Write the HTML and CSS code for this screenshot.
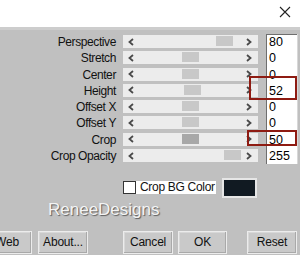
FILE: index.html
```html
<!DOCTYPE html>
<html>
<head>
<meta charset="utf-8">
<link rel="stylesheet" href="styles.css">
</head>
<body>
<div class="dialog">
  <div class="titlebar">
    <svg class="close" width="12" height="12" viewBox="0 0 12 12"><path d="M1 1 L11 11 M11 1 L1 11" stroke="#222" stroke-width="1.1" fill="none"/></svg>
  </div>
  <div class="rows">
    <div class="row"><span class="label">Perspective</span><div class="track"><svg class="arr l" width="6" height="8" viewBox="0 0 6 8"><path d="M5 1 L1.5 4 L5 7" stroke="#4a4a4a" stroke-width="1.8" fill="none"/></svg><div class="thumb" style="left:93px"></div><svg class="arr r" width="6" height="8" viewBox="0 0 6 8"><path d="M1 1 L4.5 4 L1 7" stroke="#4a4a4a" stroke-width="1.8" fill="none"/></svg></div><div class="val">80</div></div>
    <div class="row"><span class="label">Stretch</span><div class="track"><svg class="arr l" width="6" height="8" viewBox="0 0 6 8"><path d="M5 1 L1.5 4 L5 7" stroke="#4a4a4a" stroke-width="1.8" fill="none"/></svg><div class="thumb" style="left:59px"></div><svg class="arr r" width="6" height="8" viewBox="0 0 6 8"><path d="M1 1 L4.5 4 L1 7" stroke="#4a4a4a" stroke-width="1.8" fill="none"/></svg></div><div class="val">0</div></div>
    <div class="row"><span class="label">Center</span><div class="track"><svg class="arr l" width="6" height="8" viewBox="0 0 6 8"><path d="M5 1 L1.5 4 L5 7" stroke="#4a4a4a" stroke-width="1.8" fill="none"/></svg><div class="thumb" style="left:59px"></div><svg class="arr r" width="6" height="8" viewBox="0 0 6 8"><path d="M1 1 L4.5 4 L1 7" stroke="#4a4a4a" stroke-width="1.8" fill="none"/></svg></div><div class="val">0</div></div>
    <div class="row"><span class="label">Height</span><div class="track"><svg class="arr l" width="6" height="8" viewBox="0 0 6 8"><path d="M5 1 L1.5 4 L5 7" stroke="#4a4a4a" stroke-width="1.8" fill="none"/></svg><div class="thumb" style="left:61px"></div><svg class="arr r" width="6" height="8" viewBox="0 0 6 8"><path d="M1 1 L4.5 4 L1 7" stroke="#4a4a4a" stroke-width="1.8" fill="none"/></svg></div><div class="val">52</div></div>
    <div class="row"><span class="label">Offset X</span><div class="track"><svg class="arr l" width="6" height="8" viewBox="0 0 6 8"><path d="M5 1 L1.5 4 L5 7" stroke="#4a4a4a" stroke-width="1.8" fill="none"/></svg><div class="thumb" style="left:59px"></div><svg class="arr r" width="6" height="8" viewBox="0 0 6 8"><path d="M1 1 L4.5 4 L1 7" stroke="#4a4a4a" stroke-width="1.8" fill="none"/></svg></div><div class="val">0</div></div>
    <div class="row"><span class="label">Offset Y</span><div class="track"><svg class="arr l" width="6" height="8" viewBox="0 0 6 8"><path d="M5 1 L1.5 4 L5 7" stroke="#4a4a4a" stroke-width="1.8" fill="none"/></svg><div class="thumb" style="left:59px"></div><svg class="arr r" width="6" height="8" viewBox="0 0 6 8"><path d="M1 1 L4.5 4 L1 7" stroke="#4a4a4a" stroke-width="1.8" fill="none"/></svg></div><div class="val">0</div></div>
    <div class="row"><span class="label">Crop</span><div class="track"><svg class="arr l" width="6" height="8" viewBox="0 0 6 8"><path d="M5 1 L1.5 4 L5 7" stroke="#4a4a4a" stroke-width="1.8" fill="none"/></svg><div class="thumb dark" style="left:59px"></div><svg class="arr r" width="6" height="8" viewBox="0 0 6 8"><path d="M1 1 L4.5 4 L1 7" stroke="#4a4a4a" stroke-width="1.8" fill="none"/></svg></div><div class="val">50</div></div>
    <div class="row"><span class="label">Crop Opacity</span><div class="track"><svg class="arr l" width="6" height="8" viewBox="0 0 6 8"><path d="M5 1 L1.5 4 L5 7" stroke="#4a4a4a" stroke-width="1.8" fill="none"/></svg><div class="thumb" style="left:101px"></div><svg class="arr r" width="6" height="8" viewBox="0 0 6 8"><path d="M1 1 L4.5 4 L1 7" stroke="#4a4a4a" stroke-width="1.8" fill="none"/></svg></div><div class="val">255</div></div>
    <div class="mark mark-height"></div>
    <div class="mark mark-crop"></div>
  </div>
  <div class="bgrow">
    <span class="check"></span>
    <span class="bglabel">Crop BG Color</span>
    <span class="swatch"></span>
  </div>
  <div class="logo">ReneeDesigns</div>
  <div class="buttons">
    <button class="btn b-web">Web</button>
    <button class="btn b-about">About...</button>
    <button class="btn b-cancel">Cancel</button>
    <button class="btn b-ok">OK</button>
    <button class="btn b-reset">Reset</button>
  </div>
</div>
</body>
</html>
```
FILE: styles.css
```css
html, body {
  margin: 0;
  padding: 0;
}
body {
  width: 300px;
  height: 255px;
  overflow: hidden;
  background: #c0c0c0;
  font-family: "Liberation Sans", Arial, sans-serif;
  font-size: 12px;
  color: #111;
}
.dialog {
  width: 300px;
  height: 255px;
  overflow: hidden;
}
.titlebar {
  height: 27px;
  background: #ffffff;
  display: flex;
  justify-content: flex-end;
  align-items: flex-start;
  border-bottom: 3px solid #cdcdcd;
}
.close {
  margin-top: 6px;
  margin-right: 9px;
}
.rows {
  position: relative;
  padding-top: 4px;
}
.row {
  display: flex;
  height: 16.3px;
}
.label {
  width: 116px;
  flex-shrink: 0;
  text-align: right;
  letter-spacing: -0.4px;
  line-height: 16px;
  white-space: nowrap;
}
.track {
  position: relative;
  flex-shrink: 0;
  width: 135px;
  height: 13px;
  margin-top: 1px;
  margin-left: 7px;
  background: #ececec;
}
.arr {
  position: absolute;
  top: 2.5px;
}
.arr.l { left: 5px; }
.arr.r { right: 6px; }
.thumb {
  position: absolute;
  top: 1px;
  width: 17px;
  height: 10px;
  background: #c8c8c8;
}
.thumb.dark {
  background: #a8a8a8;
}
.val {
  width: 28px;
  flex-shrink: 0;
  margin-left: 8px;
  background: #ffffff;
  border-left: 1px solid #6e6e6e;
  border-right: 1px solid #d8d8d8;
  padding-left: 2px;
  line-height: 16px;
  font-size: 12.5px;
  color: #000;
}
.row:first-child .val {
  box-shadow: inset 0 1px 0 #6e6e6e;
}
.mark {
  position: absolute;
  border: 2px solid #8e1b12;
  box-sizing: border-box;
}
.mark-height {
  left: 249px;
  top: 46px;
  width: 48px;
  height: 24px;
}
.mark-crop {
  left: 247px;
  top: 100px;
  width: 50px;
  height: 16px;
}
.bgrow {
  display: flex;
  align-items: center;
  height: 20px;
  margin-top: 13.6px;
}
.check {
  flex-shrink: 0;
  width: 11px;
  height: 11px;
  margin-left: 123px;
  background: #fff;
  border: 1px solid #333;
}
.bglabel {
  flex-shrink: 0;
  width: 76px;
  height: 13px;
  background: #fff;
  padding-left: 4px;
  line-height: 13px;
  letter-spacing: -0.3px;
  white-space: nowrap;
  overflow: hidden;
}
.swatch {
  flex-shrink: 0;
  width: 31px;
  height: 16px;
  margin-left: 6px;
  background: #111a22;
  border: 2px solid #e6e6e6;
}
.logo {
  margin-top: 2.4px;
  margin-left: 48px;
  height: 20px;
  line-height: 20px;
  font-size: 17px;
  color: #f4f4f4;
  text-shadow: 1px 1px 1px #5a5a5a;
}
.buttons {
  display: flex;
  margin-top: 10.6px;
}
.btn {
  flex-shrink: 0;
  height: 23px;
  width: 50px;
  padding: 0;
  margin: 0;
  font-family: "Liberation Sans", Arial, sans-serif;
  font-size: 12px;
  color: #111;
  background: #c9c9c9;
  border: 1px solid #ececec;
  box-shadow: inset -1px -1px 0 #a9a9a9, inset 1px 1px 0 #d8d8d8;
  letter-spacing: -0.2px;
}
.b-web { margin-left: -18px; }
.b-about { margin-left: 6px; }
.b-cancel { margin-left: 35px; }
.b-ok { margin-left: 5px; width: 49px; }
.b-reset { margin-left: 20px; }
```
